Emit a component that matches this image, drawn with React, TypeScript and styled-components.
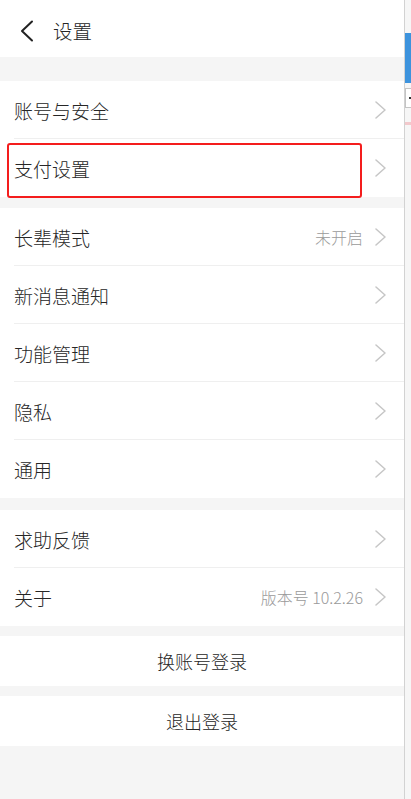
import styled, { createGlobalStyle } from "styled-components";

const GlobalStyle = createGlobalStyle`
  html, body {
    margin: 0;
    padding: 0;
    background: #f5f5f5;
  }
  body {
    font-family: "Noto Sans CJK SC", "Noto Sans", sans-serif;
  }
`;

const Page = styled.div`
  display: flex;
  width: 411px;
  height: 799px;
  overflow: hidden;
`;

const Screen = styled.div`
  width: 405px;
  display: flex;
  flex-direction: column;
  background: #f5f5f5;
  border-right: 1px solid #d2d2d2;
`;

const SideStrip = styled.div`
  flex: 1;
  display: flex;
  flex-direction: column;
  background: #f6f6f6;
  padding-top: 33px;
  gap: 5px;
`;

const SideBlue = styled.div`
  height: 50px;
  background: #3d93dd;
`;

const SideInput = styled.div`
  height: 18px;
  border: 1px solid #c4c4c4;
  border-right: none;
  background: #fff;
  display: flex;
  align-items: center;
  padding-left: 3px;
  &::before {
    content: "";
    width: 2px;
    height: 2px;
    background: #333;
  }
`;

const SidePink = styled.div`
  height: 3px;
  margin-top: 9px;
  background: #f2c9cc;
`;

const Header = styled.div`
  height: 57px;
  box-sizing: border-box;
  display: flex;
  align-items: center;
  background: #fff;
  padding: 4px 0 0 20px;
  gap: 19px;
`;

const Title = styled.span`
  font-size: 19.5px;
  font-weight: 300;
  color: #262626;
  line-height: 1;
`;

const Gap = styled.div<{ $h: number }>`
  height: ${({ $h }) => $h}px;
  flex-shrink: 0;
`;

const Group = styled.div`
  display: flex;
  flex-direction: column;
  background: #fff;
`;

const Row = styled.div<{ $last?: boolean }>`
  position: relative;
  height: 58px;
  box-sizing: border-box;
  display: flex;
  align-items: center;
  padding: 0 18px 0 14px;
  &::after {
    content: "";
    display: ${({ $last }) => ($last ? "none" : "block")};
    position: absolute;
    left: 14px;
    right: 0;
    bottom: 0;
    height: 1px;
    background: #efefef;
  }
`;

const Label = styled.span`
  flex: 1;
  font-size: 19px;
  font-weight: 300;
  color: #262626;
  line-height: 1;
`;

const Value = styled.span`
  font-size: 16px;
  font-weight: 300;
  color: #9a9a9a;
  margin-right: 12px;
  line-height: 1;
`;

const Highlight = styled.div`
  position: absolute;
  left: 7px;
  right: 42px;
  top: 4px;
  height: 55px;
  box-sizing: border-box;
  border: 2px solid #f41d1d;
  border-radius: 3px;
  z-index: 1;
`;

const ActionButton = styled.div`
  height: 50px;
  display: flex;
  align-items: center;
  justify-content: center;
  background: #fff;
  font-size: 18px;
  font-weight: 300;
  color: #262626;
`;

const Filler = styled.div`
  flex: 1;
  background: #f5f5f5;
`;

const BackIcon = () => (
  <svg width="14" height="22" viewBox="0 0 14 22">
    <polyline
      points="12,1.5 2,11 12,20.5"
      fill="none"
      stroke="#222"
      strokeWidth="2"
      strokeLinecap="round"
      strokeLinejoin="round"
    />
  </svg>
);

const Chevron = () => (
  <svg width="11" height="18" viewBox="0 0 11 18">
    <polyline
      points="1,1 10,9 1,17"
      fill="none"
      stroke="#c6c6c6"
      strokeWidth="1.5"
      strokeLinecap="round"
      strokeLinejoin="round"
    />
  </svg>
);

type Item = { label: string; value?: string; highlight?: boolean };

const groups: Item[][] = [
  [{ label: "账号与安全" }, { label: "支付设置", highlight: true }],
  [
    { label: "长辈模式", value: "未开启" },
    { label: "新消息通知" },
    { label: "功能管理" },
    { label: "隐私" },
    { label: "通用" },
  ],
  [{ label: "求助反馈" }, { label: "关于", value: "版本号 10.2.26" }],
];

const gaps = [24, 11, 12];

export default function App() {
  return (
    <>
      <GlobalStyle />
      <Page>
        <Screen>
          <Header>
            <BackIcon />
            <Title>设置</Title>
          </Header>
          {groups.map((items, gi) => (
            <div key={gi}>
              <Gap $h={gaps[gi]} />
              <Group>
                {items.map((item, i) => (
                  <Row key={item.label} $last={i === items.length - 1}>
                    <Label>{item.label}</Label>
                    {item.value && <Value>{item.value}</Value>}
                    <Chevron />
                    {item.highlight && <Highlight />}
                  </Row>
                ))}
              </Group>
            </div>
          ))}
          <Gap $h={10} />
          <ActionButton>换账号登录</ActionButton>
          <Gap $h={10} />
          <ActionButton>退出登录</ActionButton>
          <Filler />
        </Screen>
        <SideStrip>
          <SideBlue />
          <SideInput />
          <SidePink />
        </SideStrip>
      </Page>
    </>
  );
}
